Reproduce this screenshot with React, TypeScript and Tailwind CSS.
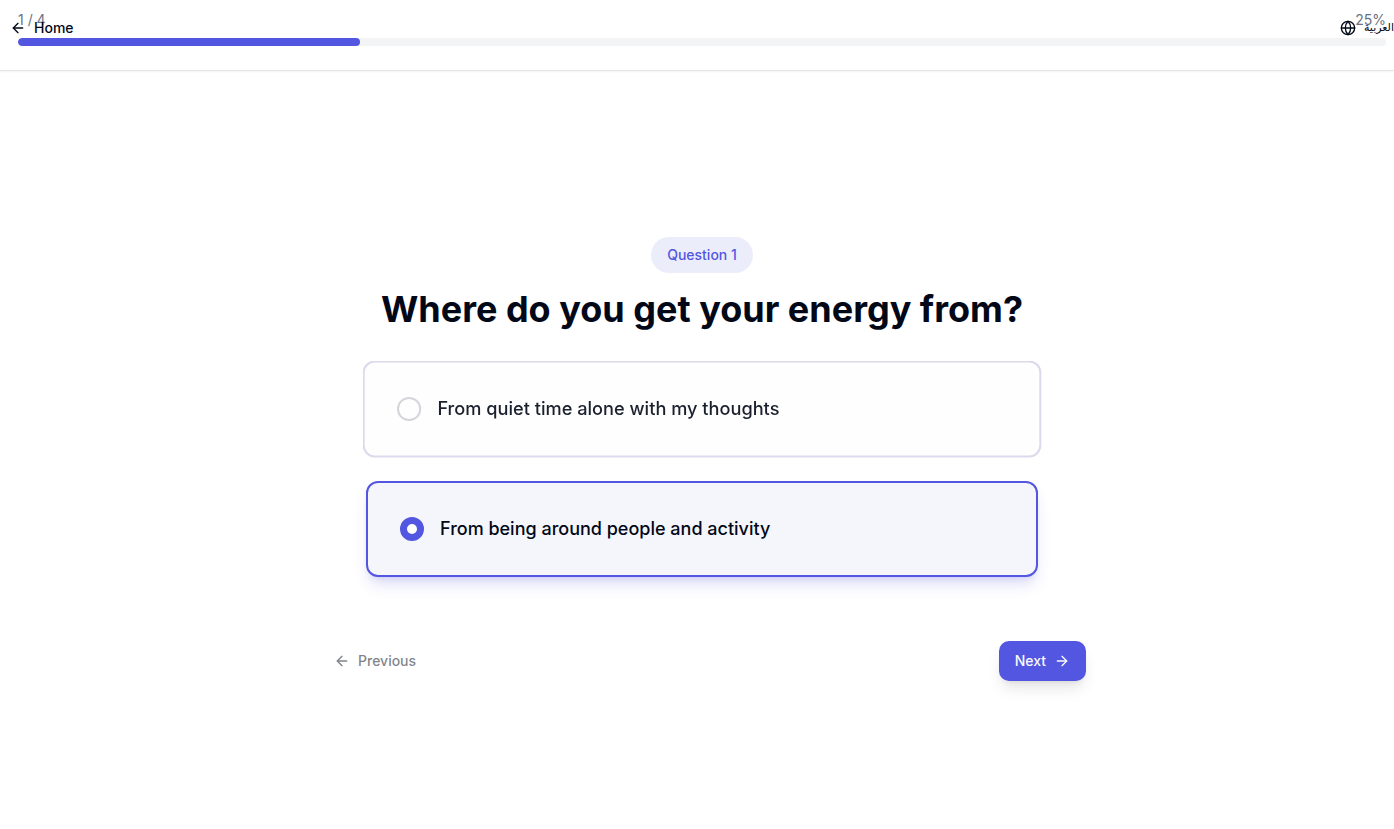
import { useState } from "react";
import { ArrowLeft, ArrowRight, Globe } from "lucide-react";

const options = [
  "From quiet time alone with my thoughts",
  "From being around people and activity",
];

type OptionProps = {
  label: string;
  selected: boolean;
  onSelect: () => void;
};

function Option({ label, selected, onSelect }: OptionProps) {
  return (
    <label
      className={
        selected
          ? "flex h-24 cursor-pointer items-center gap-4 rounded-xl border-2 border-[#5356e0] bg-[#f5f6fc] px-8 text-[#020817] shadow-lg shadow-[#5356e0]/20"
          : "flex h-24 scale-101 cursor-pointer items-center gap-4 rounded-xl border-2 border-[#dadaec] bg-[#fefefe] px-8 text-[#020817]/90 will-change-transform"
      }
    >
      <input
        type="radio"
        name="energy"
        checked={selected}
        onChange={onSelect}
        className={
          selected
            ? "size-6 shrink-0 appearance-none rounded-full border-7 border-[#5356e0] bg-white"
            : "size-6 shrink-0 appearance-none rounded-full border-2 border-[#d4d5da] bg-transparent"
        }
      />
      <span className="text-lg font-medium">{label}</span>
    </label>
  );
}

export default function App() {
  const [answer, setAnswer] = useState(1);

  return (
    <div className="min-h-screen overflow-x-hidden bg-white font-['Inter','DejaVu_Sans',sans-serif] text-[#020817]">
      <nav className="absolute inset-x-0 top-0 z-10 flex h-14 items-center justify-between overflow-hidden pl-2.5 text-sm font-medium">
        <a href="#home" className="flex items-center gap-2">
          <ArrowLeft className="size-4" />
          Home
        </a>
        <button type="button" className="flex items-center gap-2">
          <Globe className="size-4" />
          <span lang="ar" className="text-[11px] font-normal">العربية</span>
        </button>
      </nav>

      <header className="border-b border-gray-200 pt-2.5 pr-2 pb-6 pl-4.5 shadow-xs">
        <div className="mb-2 flex justify-between text-sm text-gray-500">
          <span>1 / 4</span>
          <span>25%</span>
        </div>
        <div
          role="progressbar"
          aria-label="Quiz progress"
          aria-valuenow={25}
          className="h-2 overflow-hidden rounded-full bg-gray-100"
        >
          <div className="h-full w-1/4 rounded-full bg-[#5356e0]" />
        </div>
      </header>

      <main className="pt-[166px] pb-10 pl-2.5">
        <div className="mx-auto max-w-3xl">
          <div className="flex flex-col items-center gap-4 text-center">
            <span className="rounded-full bg-[#ecedfb] px-4 py-2 text-sm font-medium text-[#5356e0]">
              Question 1
            </span>
            <h1 className="text-4xl font-bold">Where do you get your energy from?</h1>
          </div>

          <div role="radiogroup" aria-label="Where do you get your energy from?" className="mx-auto mt-8 flex max-w-2xl flex-col gap-6">
            {options.map((label, index) => (
              <Option
                key={label}
                label={label}
                selected={answer === index}
                onSelect={() => setAnswer(index)}
              />
            ))}
          </div>

          <div className="mt-16 flex justify-between text-sm font-medium">
            <button
              type="button"
              disabled
              className="flex h-10 items-center gap-2 px-4 text-[#020817] opacity-50"
            >
              <ArrowLeft className="size-4" />
              Previous
            </button>
            <button
              type="button"
              className="flex h-10 items-center gap-2 rounded-[10px] bg-[#5356e0] px-4 text-slate-50 shadow-lg"
            >
              Next
              <ArrowRight className="size-4" />
            </button>
          </div>
        </div>
      </main>
    </div>
  );
}
